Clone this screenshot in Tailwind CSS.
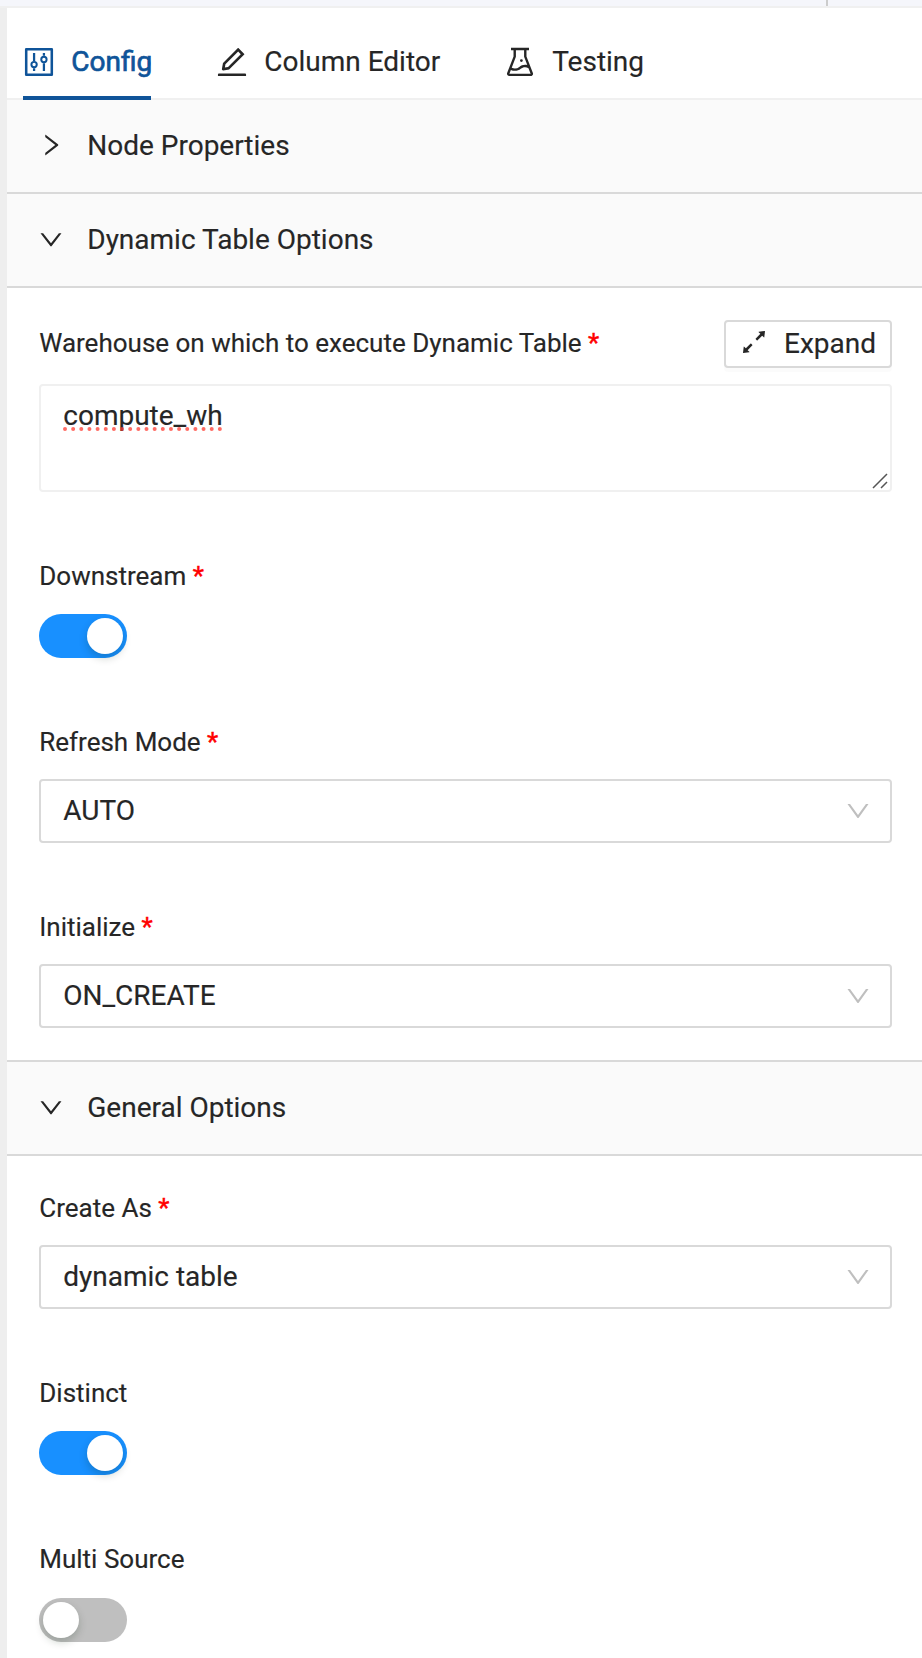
<!DOCTYPE html>
<html lang="en">
<head>
<meta charset="utf-8">
<title>Node config</title>
<script src="https://cdn.jsdelivr.net/npm/@tailwindcss/browser@4"></script>
</head>
<body class="h-[1658px] overflow-hidden bg-white font-['Roboto',sans-serif] text-[28px] leading-[44px] text-[#262626] [-webkit-text-stroke:0.15px_currentColor]">
<svg class="hidden">
  <symbol id="right" viewBox="0 0 1024 1024"><path d="M765.7 486.8L314.9 134.7A7.97 7.97 0 00302 141v77.3c0 4.9 2.3 9.6 6.1 12.6l360 281.1-360 281.1c-3.9 3-6.1 7.7-6.1 12.6V883c0 6.7 7.7 10.4 12.9 6.3l450.8-352.1a31.96 31.96 0 000-50.4z"/></symbol>
  <symbol id="down" viewBox="0 0 1024 1024"><path d="M884 256h-75c-5.1 0-9.9 2.5-12.9 6.6L512 654.2 227.9 262.6c-3-4.1-7.8-6.6-12.9-6.6h-75c-6.5 0-10.3 7.4-6.5 12.7l352.6 486.1c12.8 17.6 39 17.6 51.7 0l352.6-486.1c3.9-5.3.1-12.7-6.4-12.7z"/></symbol>
</svg>
<div class="flex h-full flex-col">
  <div class="h-2 shrink-0 border-b-2 border-[#f0f0f0] bg-[#f5f6fb]"><div class="ml-[826px] h-full w-0.5 bg-[#ccc]"></div></div>
  <div class="flex min-h-0 flex-1">
    <div class="w-[7px] shrink-0 bg-[#eee]"></div>
    <main class="min-w-0 flex-1">
      <nav class="relative flex h-[92px] border-b-2 border-[#f0f0f0] pt-[31px] pl-[14px]">
        <div class="flex w-[193px] gap-[14.25px] text-[#0f5499]">
          <svg class="mt-[5px] size-9" viewBox="0 0 1024 1024" fill="none" stroke="currentColor"><path stroke-width="72" stroke-linejoin="round" d="M148 148h728v728H148z"/><path stroke-width="64" d="M372 256v224M372 688v80M652 256v80M652 544v224"/><circle cx="372" cy="584" r="76" stroke-width="56"/><circle cx="652" cy="440" r="76" stroke-width="56"/></svg>
          <span class="mt-px h-11 [-webkit-text-stroke:0.7px_currentColor]">Config</span>
        </div>
        <div class="flex w-[288px] gap-[14.25px]">
          <svg class="mt-[5px] size-9" viewBox="0 0 1024 1024" fill="currentColor"><path d="M257.7 752c2 0 4-.2 6-.5L431.9 722c2-.4 3.9-1.3 5.3-2.8l423.9-423.9a9.96 9.96 0 000-14.1L694.9 114.9c-1.9-1.9-4.4-2.9-7.1-2.9s-5.2 1-7.1 2.9L256.8 538.8c-1.5 1.5-2.4 3.3-2.8 5.3l-29.5 168.2a33.5 33.5 0 009.4 29.8c6.6 6.4 14.9 9.9 23.8 9.9zm67.4-174.4L687.8 215l73.3 73.3-362.7 362.6-88.9 15.7 15.6-89zM880 836H144c-17.7 0-32 14.3-32 32v36c0 4.4 3.6 8 8 8h784c4.4 0 8-3.6 8-8v-36c0-17.7-14.3-32-32-32z"/></svg>
          <span class="mt-px h-11">Column Editor</span>
        </div>
        <div class="flex gap-[14.25px]">
          <svg class="mt-[5px] size-9" viewBox="0 0 1024 1024" fill="currentColor"><path d="M512 472a40 40 0 1080 0 40 40 0 10-80 0zm367 352.9L696.3 352V178H768v-68H256v68h71.7v174L145 824.9c-2.8 7.4-4.3 15.2-4.3 23.1 0 35.3 28.7 64 64 64h614.6c7.9 0 15.7-1.5 23.1-4.3 33-12.7 49.4-49.8 36.6-82.8zM395.7 364.7V180h232.6v184.7L719.2 600c-20.7-5.3-42.1-8-63.9-8-61.2 0-119.2 21.5-165.3 60a188.78 188.78 0 01-121.3 43.9c-32.7 0-64.1-8.3-91.8-23.7l118.8-307.5zM210.5 844l41.7-107.8c35.7 18.1 75.4 27.8 116.6 27.8 61.2 0 119.2-21.5 165.3-60 33.9-28.2 76.3-43.9 121.3-43.9 35 0 68.4 9.5 97.6 27.1L813.5 844h-603z"/></svg>
          <span class="mt-px h-11">Testing</span>
        </div>
        <div class="absolute -bottom-0.5 left-4 h-1 w-32 bg-[#0f5499]"></div>
      </nav>

      <h2 class="flex h-[94px] items-center gap-[22.25px] border-b-2 border-[#d9d9d9] bg-[#fafafa] pb-0.5 pl-[30px]"><svg class="size-7" fill="currentColor"><use href="#right"/></svg><span class="pt-0.5">Node Properties</span></h2>
      <h2 class="flex h-[94px] items-center gap-[22.25px] border-b-2 border-[#d9d9d9] bg-[#fafafa] pb-0.5 pl-[30px]"><svg class="size-7 rotate-90" fill="currentColor"><use href="#right"/></svg><span class="pt-0.5">Dynamic Table Options</span></h2>

      <section class="pt-8 pr-[30px] pb-8 pl-8">
        <div class="flex h-12 items-center justify-between">
          <label class="-mt-0.5 pl-[0.25px] text-[26px] leading-10">Warehouse on which to execute Dynamic Table <span class="text-[#f00] [-webkit-text-stroke:0.45px_currentColor]">*</span></label>
          <button class="flex h-12 w-[168px] items-center gap-[14px] rounded-sm border-2 border-[#d9d9d9] bg-white pl-3 shadow-[0_4px_0_rgba(0,0,0,0.016)]">
            <svg class="-mt-1 size-8" viewBox="0 0 1024 1024" fill="currentColor"><path d="M855 160.1l-189.2 23.5c-6.6.8-9.3 8.8-4.7 13.5l54.7 54.7-153.5 153.5a8.03 8.03 0 000 11.3l45.1 45.1c3.1 3.1 8.2 3.1 11.3 0l153.6-153.6 54.7 54.7a7.94 7.94 0 0013.5-4.7L863.9 169a7.9 7.9 0 00-8.9-8.9zM416.6 562.3a8.03 8.03 0 00-11.3 0L251.8 715.9l-54.7-54.7a7.94 7.94 0 00-13.5 4.7L160.1 855c-.6 5.2 3.7 9.5 8.9 8.9l189.2-23.5c6.6-.8 9.3-8.8 4.7-13.5l-54.7-54.7 153.6-153.6c3.1-3.1 3.1-8.2 0-11.3l-45.2-45z"/></svg>
            <span>Expand</span>
          </button>
        </div>
        <div class="relative mt-4 h-[108px] rounded-sm border-2 border-[#f0f0f0] px-[22px] pt-2">
          <span class="relative inline-block pl-[0.25px]">compute_wh<svg class="absolute top-[33px] left-0 h-1.5 w-[162px]" fill="none"><path d="M2 2h158" stroke="#ff3b30" stroke-opacity=".75" stroke-width="4" stroke-linecap="round" stroke-dasharray="0 8.15"/></svg></span>
          <svg class="absolute right-0.5 bottom-px size-4" fill="none" stroke="#555" stroke-width="1.5"><path d="M1 15L15 1M9 15l6-6"/></svg>
        </div>

        <label class="mt-16 block pl-[0.25px] text-[26px] leading-10">Downstream <span class="text-[#f00] [-webkit-text-stroke:0.45px_currentColor]">*</span></label>
        <div class="mt-[18px] flex h-11 w-[88px] justify-end rounded-full bg-[#1890ff] p-1"><div class="size-9 rounded-full bg-white shadow-[0_4px_8px_rgba(0,35,11,0.2)]"></div></div>

        <label class="mt-16 block pl-[0.25px] text-[26px] leading-10">Refresh Mode <span class="text-[#f00] [-webkit-text-stroke:0.45px_currentColor]">*</span></label>
        <div class="mt-[17px] flex h-16 items-center justify-between rounded-sm border-2 border-[#d9d9d9] pr-[18px] pl-[22.25px]"><span>AUTO</span><svg class="size-7 text-[#bfbfbf]" fill="currentColor"><use href="#down"/></svg></div>

        <label class="mt-16 block pl-[0.25px] text-[26px] leading-10">Initialize <span class="text-[#f00] [-webkit-text-stroke:0.45px_currentColor]">*</span></label>
        <div class="mt-[17px] flex h-16 items-center justify-between rounded-sm border-2 border-[#d9d9d9] pr-[18px] pl-[22.25px]"><span>ON_CREATE</span><svg class="size-7 text-[#bfbfbf]" fill="currentColor"><use href="#down"/></svg></div>
      </section>

      <h2 class="flex h-24 items-center gap-[22.25px] border-y-2 border-[#d9d9d9] bg-[#fafafa] pb-0.5 pl-[30px]"><svg class="size-7 rotate-90" fill="currentColor"><use href="#right"/></svg><span class="pt-0.5">General Options</span></h2>

      <section class="pt-8 pr-[30px] pl-8">
        <label class="block pl-[0.25px] text-[26px] leading-10">Create As <span class="text-[#f00] [-webkit-text-stroke:0.45px_currentColor]">*</span></label>
        <div class="mt-[17px] flex h-16 items-center justify-between rounded-sm border-2 border-[#d9d9d9] pr-[18px] pl-[22.25px]"><span>dynamic table</span><svg class="size-7 text-[#bfbfbf]" fill="currentColor"><use href="#down"/></svg></div>

        <label class="mt-16 block pl-[0.25px] text-[26px] leading-10">Distinct</label>
        <div class="mt-[18px] flex h-11 w-[88px] justify-end rounded-full bg-[#1890ff] p-1"><div class="size-9 rounded-full bg-white shadow-[0_4px_8px_rgba(0,35,11,0.2)]"></div></div>

        <label class="mt-16 block pl-[0.25px] text-[26px] leading-10">Multi Source</label>
        <div class="mt-[19px] flex h-11 w-[88px] rounded-full bg-[#bfbfbf] p-1"><div class="size-9 rounded-full bg-white shadow-[0_4px_8px_rgba(0,35,11,0.2)]"></div></div>
      </section>
    </main>
  </div>
</div>
</body>
</html>
